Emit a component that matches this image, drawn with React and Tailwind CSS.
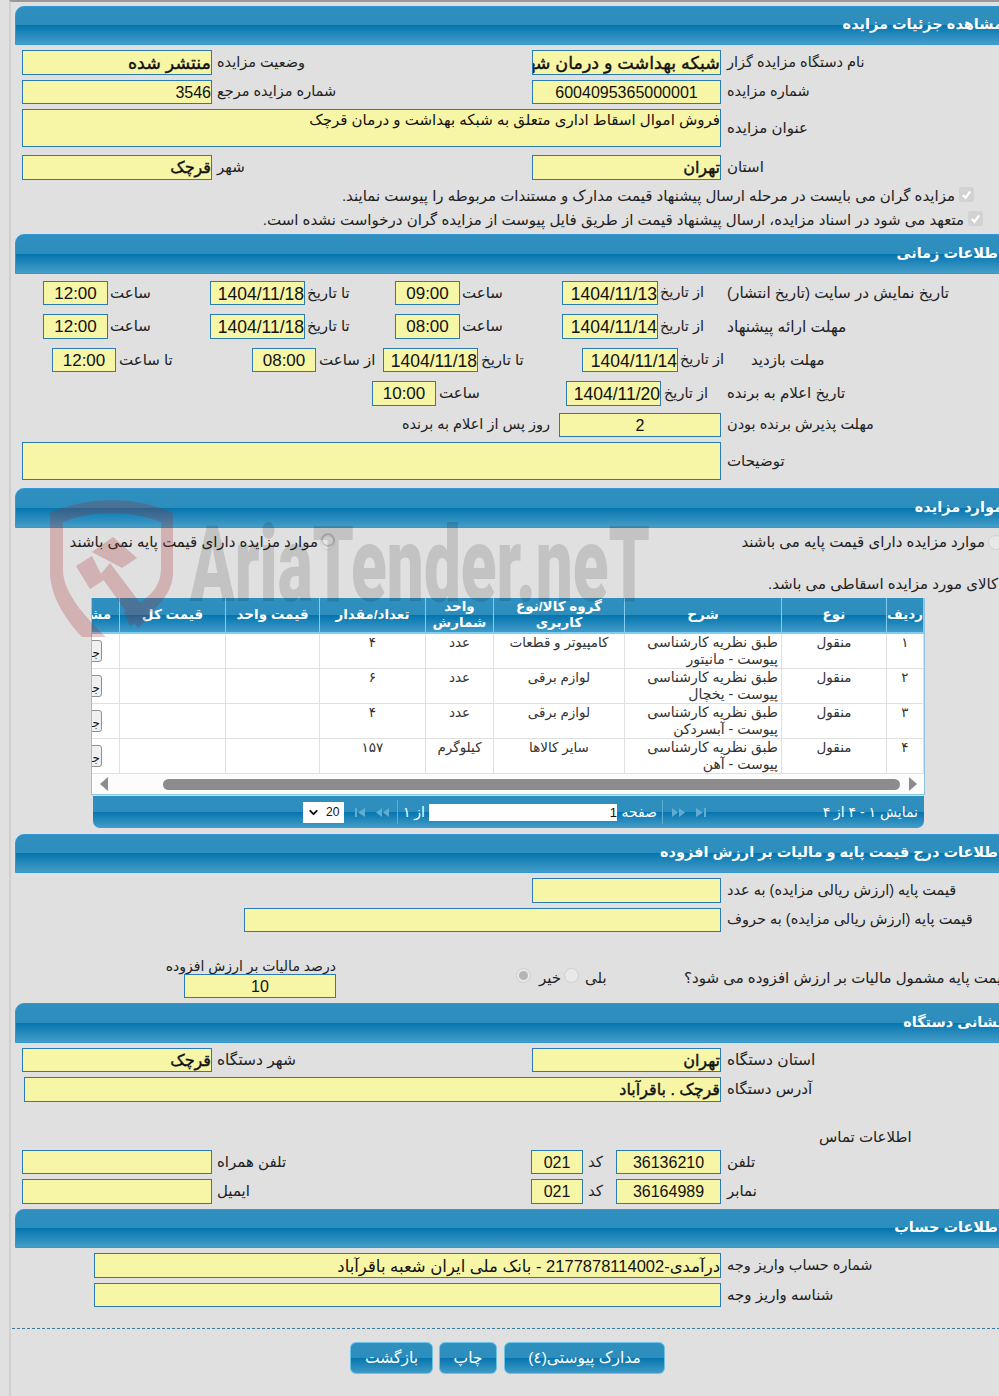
import { ChevronDown } from "lucide-react";

const Field = ({ className = "", children }) => (
  <div dir="rtl" className={"shrink-0 overflow-hidden whitespace-nowrap border border-[#2a7bb0] bg-[#f7f5a6] text-[#111] " + className}>
    {children}
  </div>
);

const Label = ({ className = "", children }) => (
  <div dir="rtl" className={"shrink-0 whitespace-nowrap text-left text-[15px] text-[#222] " + className}>
    {children}
  </div>
);

const Row = ({ className = "", children }) => <div className={"flex items-center " + className}>{children}</div>;

const Header = ({ title, className = "" }) => (
  <div
    dir="rtl"
    className={
      "flex h-[39px] items-center rounded-t-[9px] border border-[#3497d6] bg-[linear-gradient(#2f8fbe_0%,#2d8dbc_50%,#0575ae_50%,#459dc9_100%)] pb-px pr-[26px] text-[14.5px] font-bold whitespace-nowrap text-white " +
      className
    }
  >
    {title}
  </div>
);

const Button = ({ className = "", children }) => (
  <button
    dir="rtl"
    className={
      "h-[32px] rounded-[6px] border border-[#6cc3e6] bg-[linear-gradient(#2f8fbe_0%,#2d8dbc_50%,#0575ae_50%,#3f9ac6_100%)] text-[15.5px] text-white " +
      className
    }
  >
    {children}
  </button>
);

const Radio = ({ className = "", checked }) => (
  <span className={"flex h-[15px] w-[15px] shrink-0 items-center justify-center rounded-full border border-[#cfcfcf] bg-[#e8e8e8] " + className}>
    {checked && <span className="h-[9px] w-[9px] rounded-full bg-[#b5b5b5]" />}
  </span>
);

const Check = ({ className = "" }) => (
  <span className={"flex h-[15px] w-[15px] shrink-0 items-center justify-center rounded-[2px] bg-[#d2d2d2] " + className}>
    <svg width="11" height="11" viewBox="0 0 12 12" fill="none" stroke="#fff" strokeWidth="2.4">
      <path d="M2 6.5 5 9.5 10 2.5" />
    </svg>
  </span>
);

const PagerIcon = ({ flip, double }) => (
  <svg width="16" height="9" viewBox="0 0 16 9" fill="#62acd2" className={flip ? "-scale-x-100" : ""}>
    {double ? (
      <>
        <path d="M1 0 7 4.5 1 9z" />
        <path d="M8 0 14 4.5 8 9z" />
      </>
    ) : (
      <>
        <path d="M3 0 10 4.5 3 9z" />
        <rect x="11" y="0" width="2" height="9" />
      </>
    )}
  </svg>
);

const rows = [
  ["۱", "مانیتور", "کامپیوتر و قطعات", "عدد", "۴"],
  ["۲", "یخچال", "لوازم برقی", "عدد", "۶"],
  ["۳", "آبسردکن", "لوازم برقی", "عدد", "۴"],
  ["۴", "آهن", "سایر کالاها", "کیلوگرم", "۱۵۷"],
];

const heads = ["ردیف", "نوع", "شرح", "گروه کالا/نوع کاربری", "واحد شمارش", "تعداد/مقدار", "قیمت واحد", "قیمت کل", "مشاهده"];

const Table = () => (
  <div className="ml-[76px] w-[834px]">
    <div className="overflow-hidden border-x border-b border-[#8cc4e2] bg-[#fcfcfc]">
      <div dir="rtl" className="w-[832px]">
        <table className="w-[873px] table-fixed border-collapse text-[13.5px] text-[#333]">
          <colgroup>
            <col className="w-[37px]" />
            <col className="w-[105px]" />
            <col className="w-[157px]" />
            <col className="w-[131px]" />
            <col className="w-[68px]" />
            <col className="w-[106px]" />
            <col className="w-[94px]" />
            <col className="w-[106px]" />
            <col className="w-[69px]" />
          </colgroup>
          <thead>
            <tr className="h-[35px] bg-[linear-gradient(#2f8fbe_0%,#2d8dbc_50%,#0575ae_50%,#459dc9_100%)] text-[13.5px] leading-[16px] font-bold text-white">
              {heads.map((h) => (
                <th key={h} className="border-x border-b-2 border-[#7fcdf0] px-0 text-center font-bold">
                  {h}
                </th>
              ))}
            </tr>
          </thead>
          <tbody>
            {rows.map((r) => (
              <tr key={r[0]} className="h-[35px] bg-white">
                <td className="border border-[#e0e0e0] text-center align-top leading-[17px]">{r[0]}</td>
                <td className="border border-[#e0e0e0] text-center align-top leading-[17px]">منقول</td>
                <td className="border border-[#e0e0e0] pr-[3px] text-right align-top text-[14px] leading-[17px]">
                  <div className="whitespace-nowrap">طبق نظریه کارشناسی</div>
                  <div className="whitespace-nowrap">پیوست - {r[1]}</div>
                </td>
                <td className="border border-[#e0e0e0] text-center align-top leading-[17px]">{r[2]}</td>
                <td className="border border-[#e0e0e0] text-center align-top leading-[17px]">{r[3]}</td>
                <td className="border border-[#e0e0e0] text-center align-top leading-[17px]">{r[4]}</td>
                <td className="border border-[#e0e0e0]" />
                <td className="border border-[#e0e0e0]" />
                <td className="border border-[#e0e0e0] pr-[17px] align-middle">
                  <span className="flex h-[22px] w-[60px] items-end justify-start rounded-[3px] border border-[#8f8f8f] bg-[#f0f0f0] pr-[1px] text-[12px] leading-[16px] text-[#111]">
                    جزئیات
                  </span>
                </td>
              </tr>
            ))}
          </tbody>
        </table>
      </div>
      <div className="flex h-[20px] items-center">
        <svg width="8" height="14" viewBox="0 0 8 14" className="ml-[8px]" fill="#8c8c8c">
          <path d="M8 0V14L0 7z" />
        </svg>
        <div className="ml-[55px] h-[11px] w-[737px] rounded-full bg-[#8c8c8c]" />
        <svg width="8" height="14" viewBox="0 0 8 14" className="ml-[9px]" fill="#8c8c8c">
          <path d="M0 0V14L8 7z" />
        </svg>
      </div>
    </div>
    <div className="mt-px ml-[2px] flex h-[32px] w-[831px] items-center rounded-b-[7px] bg-[linear-gradient(#2f8fbe_0%,#2d8dbc_50%,#0575ae_50%,#459dc9_100%)] pl-[210px] text-[14px] text-white">
      <div className="flex h-[21px] w-[41px] items-center gap-[6px] bg-white pl-[4px] text-[12px] text-[#111]">
        <ChevronDown size={13} strokeWidth={3.5} />
        20
      </div>
      <div className="ml-[8px] flex w-[38px] gap-[6px]">
        <PagerIcon flip />
        <PagerIcon flip double />
      </div>
      <div className="ml-[7px] h-[24px] w-px bg-[#62acd2]" />
      <div dir="rtl" className="ml-[7px] w-[20px] whitespace-nowrap">از ۱</div>
      <div dir="rtl" className="ml-[4px] h-[17px] w-[188px] bg-white text-[13px] leading-[17px] text-[#111]">1</div>
      <div dir="rtl" className="ml-[5px] w-[35px] whitespace-nowrap">صفحه</div>
      <div className="ml-[5px] h-[24px] w-px bg-[#62acd2]" />
      <div className="ml-[8px] flex w-[38px] gap-[6px]">
        <PagerIcon double />
        <PagerIcon />
      </div>
      <div dir="rtl" className="mr-[6px] ml-auto whitespace-nowrap">نمایش ۱ - ۴ از ۴</div>
    </div>
  </div>
);

const Watermark = () => (
  <svg className="pointer-events-none absolute top-0 left-0" width="999" height="700" viewBox="0 0 999 700">
    <path
      fill="rgba(165,35,35,0.25)"
      d="M50 513C88 496 136 496 173 513V572C173 598 150 614 130 626L124 612C146 600 161 590 161 568V522C130 510 92 510 63 522V570C63 592 84 616 106 637H82C66 620 50 596 50 572ZM76 566 92 556 104 580 90 589ZM92 552 113 537 137 558 122 568ZM110 563 150 616 138 628 100 575Z"
    />
    <circle cx="328" cy="540" r="6" fill="none" stroke="rgba(0,0,0,0.15)" strokeWidth="2" />
    <text x="190" y="601" textLength="460" lengthAdjust="spacingAndGlyphs" fontFamily="Roboto" fontWeight="900" fontSize="105" fill="rgba(0,0,0,0.13)">
      AriaTender.neT
    </text>
  </svg>
);

export default function App() {
  const num = "text-center text-[16px] leading-[24px]";
  const date = "text-right text-[17.5px] leading-[24px]";
  const time = "text-center text-[17px] leading-[24px]";
  const val = "text-right text-[16px] leading-[24px] [-webkit-text-stroke:0.4px_#111]";
  const big = "text-right text-[17.5px] leading-[24px] [-webkit-text-stroke:0.4px_#111]";
  return (
    <div className="relative h-[1396px] w-[999px] overflow-hidden bg-[#e0e0e0] font-['Liberation_Sans','DejaVu_Sans',sans-serif]">
      <div className="ml-[9px] h-full w-[1021px] border-t-2 border-l-2 border-t-[#999] border-l-[#cfcfcf] pt-[4px] pl-[4px]">
        <Header title="مشاهده جزئیات مزایده" />

        <Row className="mt-[5px] pl-[7px]">
          <Field className={"h-[25px] w-[190px] " + big}>منتشر شده</Field>
          <Label className="w-[320px] pl-[5px] !text-[14.5px]">وضعیت مزایده</Label>
          <Field className={"h-[25px] w-[189px] " + big}>شبکه بهداشت و درمان شهرستان قرچک</Field>
          <Label className="pl-[6px] !text-[14.5px]">نام دستگاه مزایده گزار</Label>
        </Row>
        <Row className="mt-[5px] pl-[7px]">
          <Field className="h-[24px] w-[190px] text-right text-[16px] leading-[24px]">3546</Field>
          <Label className="w-[320px] pl-[5px] !text-[14.5px]">شماره مزایده مرجع</Label>
          <Field className={"h-[24px] w-[189px] " + num}>6004095365000001</Field>
          <Label className="pl-[6px] !text-[14.5px]">شماره مزایده</Label>
        </Row>
        <Row className="mt-[5px] pl-[7px]">
          <Field className="h-[38px] w-[699px] text-right text-[15px] leading-[19px]">فروش اموال اسقاط اداری متعلق به شبکه بهداشت و درمان قرچک</Field>
          <Label className="pl-[6px]">عنوان مزایده</Label>
        </Row>
        <Row className="mt-[8px] pl-[7px]">
          <Field className={"h-[25px] w-[190px] " + val}>قرچک</Field>
          <Label className="w-[320px] pl-[5px]">شهر</Label>
          <Field className={"h-[25px] w-[189px] " + val}>تهران</Field>
          <Label className="pl-[6px]">استان</Label>
        </Row>
        <Row className="mt-[4px] h-[24px] justify-end pr-[56px]">
          <Label className="mr-[4px]">مزایده گران می بایست در مرحله ارسال پیشنهاد قیمت مدارک و مستندات مربوطه را پیوست نمایند.</Label>
          <Check className="mb-[4px]" />
        </Row>
        <Row className="h-[24px] justify-end pr-[47px]">
          <Label className="mr-[4px]">متعهد می شود در اسناد مزایده، ارسال پیشنهاد قیمت از طریق فایل پیوست از مزایده گران درخواست نشده است.</Label>
          <Check className="mb-[4px]" />
        </Row>

        <Header title="اطلاعات زمانی" className="mt-[2px] h-[40px]" />

        <Row className="mt-[7px] pl-[28px]">
          <Field className={"h-[24px] w-[65px] " + time}>12:00</Field>
          <Label className="w-[102px] pl-[2px]">ساعت</Label>
          <Field className={"h-[24px] w-[95px] " + date}>1404/11/18</Field>
          <Label className="w-[90px] pl-[2px]">تا تاریخ</Label>
          <Field className={"h-[24px] w-[65px] " + time}>09:00</Field>
          <Label className="w-[102px] pl-[2px]">ساعت</Label>
          <Field className={"h-[24px] w-[96px] " + date}>1404/11/13</Field>
          <Label className="w-[69px] pl-[2px] !text-[14.5px]">از تاریخ</Label>
          <Label className="!text-[15.2px]">تاریخ نمایش در سایت (تاریخ انتشار)</Label>
        </Row>
        <Row className="mt-[9px] pl-[28px]">
          <Field className={"h-[25px] w-[65px] " + time}>12:00</Field>
          <Label className="w-[102px] pl-[2px]">ساعت</Label>
          <Field className={"h-[25px] w-[95px] " + date}>1404/11/18</Field>
          <Label className="w-[90px] pl-[2px]">تا تاریخ</Label>
          <Field className={"h-[25px] w-[65px] " + time}>08:00</Field>
          <Label className="w-[102px] pl-[2px]">ساعت</Label>
          <Field className={"h-[25px] w-[96px] " + date}>1404/11/14</Field>
          <Label className="w-[69px] pl-[2px] !text-[14.5px]">از تاریخ</Label>
          <Label className="!text-[15.5px]">مهلت ارائه پیشنهاد</Label>
        </Row>
        <Row className="mt-[9px] pl-[37px]">
          <Field className={"h-[24px] w-[64px] " + time}>12:00</Field>
          <Label className="w-[136px] pl-[3px]">تا ساعت</Label>
          <Field className={"h-[24px] w-[64px] " + time}>08:00</Field>
          <Label className="w-[67px] pl-[3px]">از ساعت</Label>
          <Field className={"h-[24px] w-[95px] " + date}>1404/11/18</Field>
          <Label className="w-[104px] pl-[3px]">تا تاریخ</Label>
          <Field className={"h-[24px] w-[96px] " + date}>1404/11/14</Field>
          <Label className="w-[73px] pl-[2px] !text-[14.5px]">از تاریخ</Label>
          <Label>مهلت بازدید</Label>
        </Row>
        <Row className="mt-[9px] pl-[357px]">
          <Field className={"h-[25px] w-[64px] " + time}>10:00</Field>
          <Label className="w-[130px] pl-[3px]">ساعت</Label>
          <Field className={"h-[25px] w-[95px] " + date}>1404/11/20</Field>
          <Label className="w-[66px] pl-[3px] !text-[14.5px]">از تاریخ</Label>
          <Label>تاریخ اعلام به برنده</Label>
        </Row>
        <Row className="mt-[7px] pl-[378px]">
          <Label className="w-[157px] !text-right !text-[14.5px]">روز پس از اعلام به برنده</Label>
          <Field className={"ml-[9px] h-[24px] w-[162px] " + num}>2</Field>
          <Label className="pl-[6px] !text-[14.5px]">مهلت پذیرش برنده بودن</Label>
        </Row>
        <Row className="mt-[5px] pl-[7px]">
          <Field className="h-[38px] w-[699px]" />
          <Label className="pl-[6px]">توضیحات</Label>
        </Row>

        <Header title="موارد مزایده" className="mt-[8px] h-[40px]" />

        <Row className="h-[28px] pl-[53px]">
          <Label className="w-[250px] !text-right">موارد مزایده دارای قیمت پایه نمی باشند</Label>
          <Radio className="ml-[2px]" />
          <Label className="ml-[407px] w-[243px] !text-right">موارد مزایده دارای قیمت پایه می باشند</Label>
          <Radio className="ml-[3px]" />
        </Row>
        <Row className="mt-[16px] h-[24px] pl-[753px]">
          <Label>کالای مورد مزایده اسقاطی می باشد.</Label>
        </Row>
        <div className="mt-[2px]">
          <Table />
        </div>

        <Header title="اطلاعات درج قیمت پایه و مالیات بر ارزش افزوده" className="mt-[6px]" />

        <Row className="mt-[5px] pl-[517px]">
          <Field className="h-[25px] w-[189px]" />
          <Label className="pl-[6px] !text-[14.5px]">قیمت پایه (ارزش ریالی مزایده) به عدد</Label>
        </Row>
        <Row className="mt-[5px] pl-[229px]">
          <Field className="h-[24px] w-[477px]" />
          <Label className="pl-[6px] !text-[14.5px]">قیمت پایه (ارزش ریالی مزایده) به حروف</Label>
        </Row>
        <div className="mt-[26px] flex items-start pl-[153px]">
          <div className="flex w-[168px] shrink-0 flex-col items-end">
            <Label className="h-[16px] leading-[16px] !text-[14px]">درصد مالیات بر ارزش افزوده</Label>
            <Field className={"h-[24px] w-[152px] " + num}>10</Field>
          </div>
          <Radio className="mt-[10px] ml-[180px]" checked />
          <Label className="mt-[9px] ml-[8px] w-[25px]">خیر</Label>
          <Radio className="mt-[10px]" />
          <Label className="mt-[9px] ml-[6px] w-[99px]">بلی</Label>
          <Label className="mt-[9px]">قیمت پایه مشمول مالیات بر ارزش افزوده می شود؟</Label>
        </div>

        <Header title="نشانی دستگاه" className="mt-[5px] h-[40px]" />

        <Row className="mt-[5px] pl-[7px]">
          <Field className={"h-[24px] w-[190px] " + val}>قرچک</Field>
          <Label className="w-[320px] pl-[5px] !text-[15.5px]">شهر دستگاه</Label>
          <Field className={"h-[24px] w-[189px] " + val}>تهران</Field>
          <Label className="pl-[6px] !text-[15.5px]">استان دستگاه</Label>
        </Row>
        <Row className="mt-[5px] pl-[9px]">
          <Field className={"h-[25px] w-[697px] " + val}>قرچک . باقرآباد</Field>
          <Label className="pl-[6px]">آدرس دستگاه</Label>
        </Row>
        <Row className="mt-[24px] h-[23px] pl-[804px]">
          <Label>اطلاعات تماس</Label>
        </Row>
        <Row className="mt-[1px] pl-[7px]">
          <Field className="h-[24px] w-[190px]" />
          <Label className="w-[319px] pl-[5px]">تلفن همراه</Label>
          <Field className={"h-[24px] w-[52px] " + num}>021</Field>
          <Label className="w-[33px] pl-[5px]">کد</Label>
          <Field className={"h-[24px] w-[105px] " + num}>36136210</Field>
          <Label className="pl-[6px]">تلفن</Label>
        </Row>
        <Row className="mt-[5px] pl-[7px]">
          <Field className="h-[25px] w-[190px]" />
          <Label className="w-[319px] pl-[5px]">ایمیل</Label>
          <Field className={"h-[25px] w-[52px] " + num}>021</Field>
          <Label className="w-[33px] pl-[5px]">کد</Label>
          <Field className={"h-[25px] w-[105px] " + num}>36164989</Field>
          <Label className="pl-[6px]">نمابر</Label>
        </Row>

        <Header title="اطلاعات حساب" className="mt-[5px]" />

        <Row className="mt-[5px] pl-[79px]">
          <Field className="h-[25px] w-[627px] text-right text-[16.5px] leading-[24px]">درآمدی-2177878114002 - بانک ملی ایران شعبه باقرآباد</Field>
          <Label className="pl-[6px] !text-[14.5px]">شماره حساب واریز وجه</Label>
        </Row>
        <Row className="mt-[5px] pl-[79px]">
          <Field className="h-[24px] w-[627px]" />
          <Label className="pl-[6px]">شناسه واریز وجه</Label>
        </Row>

        <div className="mt-[21px] -ml-[3px] border-t border-dashed border-[#3c7a9c]" />

        <div className="mt-[13px] ml-[335px] flex gap-[6px]">
          <Button className="w-[83px]">بازگشت</Button>
          <Button className="w-[58px]">چاپ</Button>
          <Button className="ml-px w-[161px]">مدارک پیوستی(٤)</Button>
        </div>
      </div>
      <Watermark />
    </div>
  );
}
